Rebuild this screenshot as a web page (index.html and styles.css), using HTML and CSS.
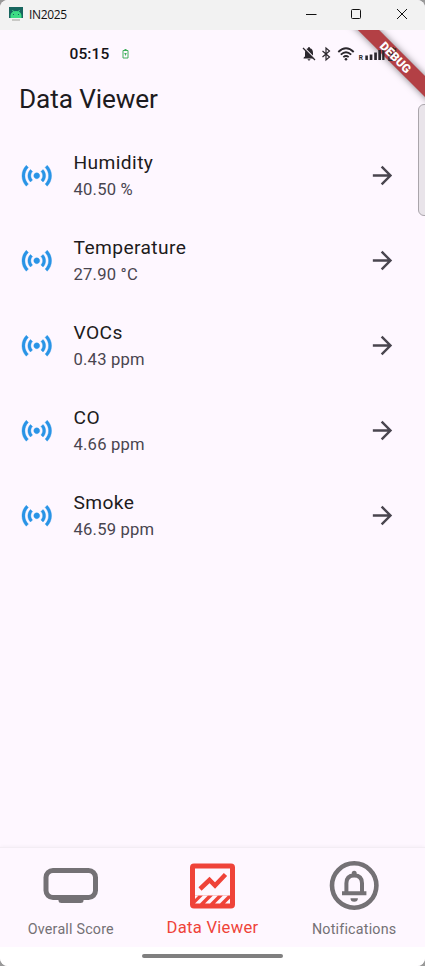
FILE: index.html
```
<!DOCTYPE html>
<html lang="en">
<head>
<meta charset="utf-8">
<title>IN2025</title>
<link rel="stylesheet" href="styles.css">
</head>
<body>
<svg class="defs" aria-hidden="true">
  <symbol id="sensors" viewBox="0 0 24 24"><path stroke-width=".25" d="M7.76 16.24C6.67 15.16 6 13.66 6 12s.67-3.16 1.76-4.24l1.42 1.42C8.45 9.9 8 10.9 8 12c0 1.1.45 2.1 1.17 2.83l-1.41 1.41zm8.48 0C17.33 15.16 18 13.66 18 12s-.67-3.16-1.76-4.24l-1.42 1.42C15.55 9.9 16 10.9 16 12c0 1.1-.45 2.1-1.17 2.83l1.41 1.41zM12 10c-1.1 0-2 .9-2 2s.9 2 2 2 2-.9 2-2-.9-2-2-2zm8 2c0 2.21-.9 4.21-2.35 5.65l1.42 1.42C20.88 17.26 22 14.76 22 12s-1.12-5.26-2.93-7.07l-1.42 1.42C19.1 7.79 20 9.79 20 12zM6.35 6.35L4.93 4.93C3.12 6.74 2 9.24 2 12s1.12 5.26 2.93 7.07l1.42-1.42C4.9 16.21 4 14.21 4 12s.9-4.21 2.35-5.65z"/></symbol>
  <symbol id="arrow" viewBox="0 0 24 24"><path d="M12 4l-1.41 1.41L16.17 11H4v2h12.17l-5.58 5.59L12 20l8-8z"/></symbol>
</svg>
<div class="window">
  <header class="titlebar">
    <svg class="app-icon" viewBox="0 0 14 15"><path fill="#17665f" d="M0 0h14v11H0z"/><path fill="#3ddc84" d="M1.500 11V8.500a5.500 4.500 0 0 1 11 0V11z"/><path stroke="#3ddc84" d="M3.500 3l1.500 2.500M10.500 3L9 5.500"/><path fill="#17665f" d="M4 7h1v1H4zM9 7h1v1H9z"/><path fill="#c9c9c6" d="M3 12h8v2H3z"/></svg>
    <span class="app-name">IN2025</span>
    <svg class="controls" viewBox="0 0 104 14" fill="none" stroke="#111"><path d="M1 7.500h10.500"/><rect x="46.500" y="2.500" width="9" height="9" rx="1"/><path d="M92 2l10 10M102 2L92 12"/></svg>
  </header>
  <main class="screen">
    <div class="debug"></div>
    <div class="status">
      <span class="clock">05:15</span>
      <svg class="charge" viewBox="0 0 7 10"><path fill="none" stroke="#3fae5b" d="M1 1.500h5v7.500H1z"/><path fill="#3fae5b" d="M2.500 0h2v1h-2zM2.200 4h2.600L3.500 7z"/></svg>
      <svg class="signals" viewBox="0 0 96 16">
        <path fill="#2b272d" d="M1.500 12.500q0-1.300 1.500-2V7Q3 3 6 2.300 6 1 7 1t1 1.300Q11 3 11 7v3.500q1.500.7 1.500 2zM5.600 13.200h2.800a1.400 1.300 0 0 1-2.800 0z"/>
        <path stroke="#fef7ff" stroke-width="1.100" d="M2 1.500l11.500 11.500"/>
        <path fill="none" stroke="#2b272d" stroke-width="1.200" d="M1 2l12 12M20.500 5l7 6-3.500 3V2l3.500 3-7 6"/>
        <path fill="none" stroke="#2b272d" stroke-width="1.800" d="M36.300 6Q44-1.500 51.700 6M38.800 8.700q5.200-4.800 10.400 0M41.300 11.200q2.700-2.400 5.400 0"/>
        <circle cx="44" cy="13.200" r="1.300" fill="#2b272d"/>
        <text x="56.800" y="14" class="roam">R</text>
        <path fill="#2b272d" d="M63.300 9.500h2.600V14h-2.600zM67.700 8.500h2.700V14h-2.700zM72.200 6.500h2.700V14h-2.700zM76.300 4H79v10h-2.700zM80.200 2h2.300v12h-2.300z"/>
        <path fill="none" stroke="#2b272d" stroke-width="1.300" d="M87 3h6.700v11.300H87zM89 2h3"/>
        <path fill="#2b272d" d="M91 5l-3 4.300h2V13l3-4.500h-2z"/>
      </svg>
    </div>
    <div class="debug label"><span>DEBUG</span></div>
    <div class="side-handle"></div>
    <h1>Data Viewer</h1>
    <ul class="readings">
      <li><svg class="sensor"><use href="#sensors"/></svg><div class="info"><b>Humidity</b><span>40.50 %</span></div><svg class="arrow"><use href="#arrow"/></svg></li>
      <li><svg class="sensor"><use href="#sensors"/></svg><div class="info"><b>Temperature</b><span>27.90 °C</span></div><svg class="arrow"><use href="#arrow"/></svg></li>
      <li><svg class="sensor"><use href="#sensors"/></svg><div class="info"><b>VOCs</b><span>0.43 ppm</span></div><svg class="arrow"><use href="#arrow"/></svg></li>
      <li><svg class="sensor"><use href="#sensors"/></svg><div class="info"><b>CO</b><span>4.66 ppm</span></div><svg class="arrow"><use href="#arrow"/></svg></li>
      <li><svg class="sensor"><use href="#sensors"/></svg><div class="info"><b>Smoke</b><span>46.59 ppm</span></div><svg class="arrow"><use href="#arrow"/></svg></li>
    </ul>
  </main>
  <nav class="tabs">
    <div class="tab"><svg viewBox="0 0 60 60"><rect x="5" y="14.500" width="49.500" height="27" rx="7" fill="none" stroke="currentColor" stroke-width="5"/><path fill="currentColor" d="M17.500 43h25v1.500q0 2.500-3 2.500h-19q-3 0-3-2.500z"/></svg><span>Overall Score</span></div>
    <div class="tab active"><svg viewBox="-1 .500 60 60"><path fill="currentColor" fill-rule="evenodd" d="M11 8h37q4 0 4 4v37q0 4-4 4H11q-4 0-4-4V12q0-4 4-4zm1 5v27h35V13z"/><path fill="none" stroke="currentColor" stroke-width="4.500" d="M17 33.500l9.500-9 5.500 5.500 10.500-11"/><path fill="#fef7ff" d="M12 40h3.500L12 43.500zM20 40h5l-8 8h-5zM30 40h5l-8 8h-5zM40 40h5l-8 8h-5zM47 43v5h-5z"/></svg><span>Data Viewer</span></div>
    <div class="tab"><svg viewBox="-.700 .800 60 60"><g fill="none" stroke="currentColor"><circle cx="29.500" cy="30.300" r="22.200" stroke-width="4.600"/><path stroke-width="4" d="M21.700 38V28q0-7.800 7.800-7.800t7.800 7.800v10M17.300 38h24.400"/></g><path fill="currentColor" d="M27 21v-3a2.500 2.500 0 0 1 5 0v3zM25.800 43h7.400a3.700 3.500 0 0 1-7.400 0z"/></svg><span>Notifications</span></div>
  </nav>
  <footer class="home"><i></i></footer>
</div>
</body>
</html>
```
FILE: styles.css
```
* { box-sizing: border-box; }
body { margin: 0; background: #999; font-family: Roboto, sans-serif; }
.defs { position: absolute; width: 0; height: 0; }
.window { position: relative; display: flex; flex-direction: column; width: 425px; height: 966px; overflow: hidden; border-radius: 8px; background: #fef7ff; }
.titlebar { display: flex; align-items: center; flex: 0 0 30px; padding: 0 16px 2px 9px; background: #f2f2f2; }
.app-icon { width: 14px; height: 15px; }
.app-name { margin-left: 6px; font: 12px "Open Sans", sans-serif; letter-spacing: -.35px; color: #111; }
.controls { width: 104px; height: 14px; margin-left: auto; }
.screen { position: relative; flex: 1; overflow: hidden; }
.status { position: relative; display: flex; align-items: center; height: 48px; padding-left: 69.500px; }
.clock { width: 52px; font-size: 15.500px; font-weight: 500; letter-spacing: .1px; color: #151217; }
.charge { width: 7px; height: 10px; }
.signals { width: 96px; height: 16px; margin-left: 173px; flex: none; }
.roam { font: 700 6.500px Roboto, sans-serif; fill: #2b272d; }
.debug { position: absolute; top: 18.500px; right: -50px; width: 160px; height: 15px; transform: rotate(45deg); background: #b34045; box-shadow: 0 0 7px rgba(0,0,0,.5); color: #fff; text-align: center; font-size: 12px; line-height: 16px; font-weight: 900; }
.debug.label { background: none; box-shadow: none; }
.debug span { padding-left: 2px; }
.side-handle { position: absolute; top: 74px; right: -8px; width: 15px; height: 112px; border: 1px solid #aaa5ab; border-radius: 6px; background: #e9e4ea; }
h1 { margin: 5px 0 0 19px; font-size: 26.200px; line-height: 32px; font-weight: 400; letter-spacing: -.12px; color: #1d1b20; }
.readings { list-style: none; margin: 18px 0 0; padding: 0; }
.readings li { display: flex; align-items: center; height: 85.100px; padding: 0 28px 0 19px; }
.sensor { width: 35.500px; height: 35.500px; fill: #2994e6; stroke: #2994e6; }
.info { display: flex; flex-direction: column; flex: 1; margin-left: 19px; }
.info b { font-size: 19.200px; line-height: 27px; margin-top: -1px; font-weight: 400; letter-spacing: .4px; color: #1d1b20; }
.info span { font-size: 16.600px; line-height: 25px; margin: 1px 0 -1px; letter-spacing: .2px; color: #49454f; }
.arrow { width: 29px; height: 29px; fill: #49454f; }
.tabs { display: grid; grid-template-columns: repeat(3, 1fr); flex: 0 0 100px; border-top: 1px solid #f3edf4; box-shadow: 0 -1px 3px rgba(0,0,0,.03); }
.tab { display: flex; flex-direction: column; align-items: center; padding-top: 8px; color: #747175; }
.tab svg { width: 60px; height: 60px; }
.tab span { font-size: 14.300px; line-height: 20px; margin-top: 3px; letter-spacing: .2px; white-space: nowrap; }
.tab.active { color: #ef4339; }
.tab.active span { font-size: 16.600px; margin-top: 2px; letter-spacing: .28px; }
.home { display: flex; justify-content: center; flex: 0 0 19px; padding-top: 7px; background: #fff; }
.home i { width: 141px; height: 4px; border-radius: 2px; background: #7f7f7f; }
```
